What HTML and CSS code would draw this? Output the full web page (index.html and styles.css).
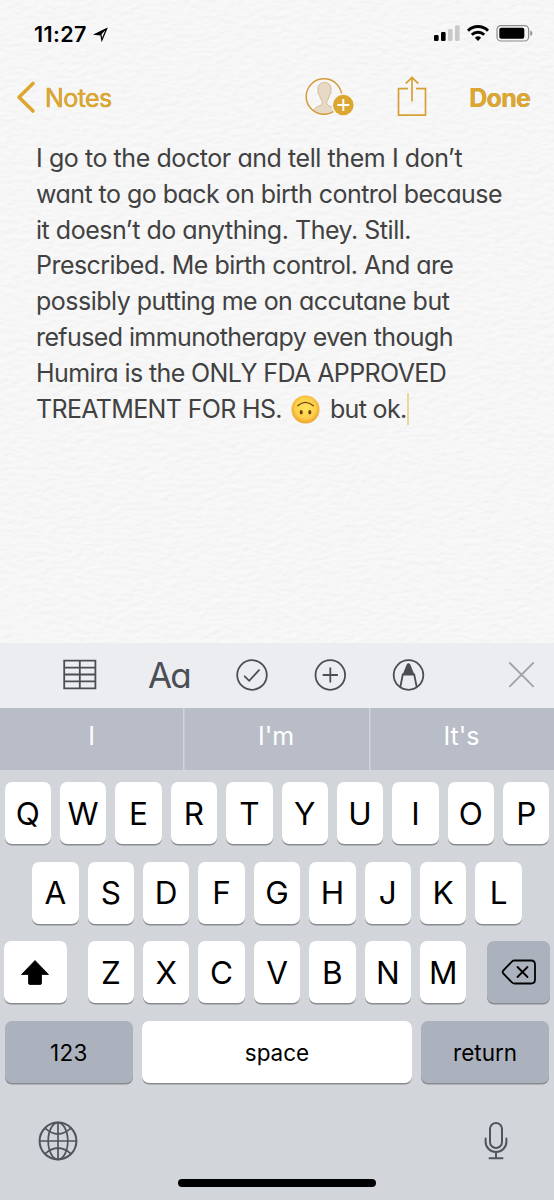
FILE: index.html
```html
<!DOCTYPE html>
<html lang="en">
<head>
    <meta charset="UTF-8">
    <meta name="viewport" content="width=device-width, initial-scale=1.0">
    <title>Notes</title>
    <link rel="stylesheet" href="styles.css">
</head>
<body>
    <div class="screen">
        <svg class="paper" width="554" height="643">
            <filter id="grain" x="0" y="0" width="100%" height="100%" color-interpolation-filters="sRGB">
                <feTurbulence type="fractalNoise" baseFrequency="0.11 0.22" numOctaves="2" seed="4" result="noise"/>
                <feDiffuseLighting in="noise" surfaceScale="0.28" lighting-color="#fafafa">
                    <feDistantLight azimuth="250" elevation="80"/>
                </feDiffuseLighting>
            </filter>
            <rect width="554" height="643" filter="url(#grain)"/>
        </svg>

        <header class="status-bar">
            <span class="time">11:27</span>
            <svg class="location" width="16" height="16" viewBox="0 0 16 16">
                <path d="M2.2 7.300 13.600 1.800 8.900 13 7.900 7.800Z" fill="none" stroke="#000" stroke-width="1.300"/>
                <path d="M1 7.500 14 1 8 8Z"/>
            </svg>
            <svg class="indicators" width="100" height="18" viewBox="0 0 100 18">
                <rect x="0" y="10" width="4.6" height="6" rx="1.3"/>
                <rect x="7" y="7" width="4.6" height="9" rx="1.3"/>
                <rect x="14" y="4" width="4.6" height="12" rx="1.3" fill="#c9c9c9"/>
                <rect x="21" y="0.3" width="4.6" height="15.7" rx="1.3" fill="#c9c9c9"/>
                <g fill="none" stroke="#000" stroke-width="2.9">
                    <path d="M34 5.7a14 14 0 0 1 20 0"/>
                    <path d="M37.8 9.8a8.8 8.8 0 0 1 12.4 0"/>
                </g>
                <path d="M40.9 12.7a4.6 4.6 0 0 1 6.2 0L44 15.9Z"/>
                <rect x="63" y="0.6" width="31.6" height="15.4" rx="4" fill="none" stroke="#8c8c8c" stroke-width="1.2"/>
                <rect x="65.3" y="2.8" width="25" height="11" rx="2"/>
                <path d="M96.3 5.6q2 .6 2 2.7t-2 2.7Z" fill="#8c8c8c"/>
            </svg>
        </header>

        <nav class="nav-bar">
            <svg class="chevron" width="20" height="34" viewBox="0 0 20 34">
                <path d="M17 3.5 3 17.2 17 31" fill="none" stroke="#dba731" stroke-width="3.6" stroke-linecap="round" stroke-linejoin="round"/>
            </svg>
            <span class="back">Notes</span>
            <svg class="person" width="50" height="40" viewBox="0 0 50 40">
                <path d="M8 33.200q2.500-3.200 8-5 1.500-.8 1.200-4-2.200-2.400-2.700-6.200-1.800-.8-1.500-3.500-.9-9 6.500-9t6.500 9q.2 2.700-1.500 3.500-.5 3.800-2.700 6.200-.3 3.200 1.200 4 5 1.800 7 5-5 4.300-11 4.300t-11-4.300Z" fill="#e7d9c6" stroke="#cfae82" stroke-width=".8"/>
                <circle cx="19" cy="19.5" r="17.8" fill="none" stroke="#d39b3a" stroke-width="1.5"/>
                <circle cx="38.3" cy="28" r="11.8" fill="#f6f6f6"/>
                <circle cx="38.3" cy="28" r="10.3" fill="#dba731"/>
                <path d="M32.3 28h12M38.3 22v12" stroke="#fff" stroke-width="2"/>
            </svg>
            <svg class="share" width="30" height="42" viewBox="0 0 30 42">
                <path d="M11 13.7H1.5v26.5h27V13.7H19M15 26.5V2.500M8.7 8.7 15 2.400l6.300 6.300" fill="none" stroke="#d6a035" stroke-width="1.7"/>
            </svg>
            <span class="done">Done</span>
        </nav>

        <main class="note">
            <p class="line l1">I go to the doctor and tell them I don’t</p>
            <p class="line l2">want to go back on birth control because</p>
            <p class="line l3">it doesn’t do anything. They. Still.</p>
            <p class="line l4">Prescribed. Me birth control. And are</p>
            <p class="line l5">possibly putting me on accutane but</p>
            <p class="line l6">refused immunotherapy even though</p>
            <p class="line l7">Humira is the ONLY FDA APPROVED</p>
            <p class="line l8">
                <span>TREATMENT FOR HS.</span>
                <svg class="emoji" width="29" height="29" viewBox="0 0 29 29">
                    <defs>
                        <radialGradient id="face" cx=".5" cy=".45" r=".55">
                            <stop offset="0" stop-color="#ffe45f"/>
                            <stop offset=".65" stop-color="#fdd04a"/>
                            <stop offset="1" stop-color="#eda02c"/>
                        </radialGradient>
                    </defs>
                    <circle cx="14.5" cy="14.5" r="14" fill="url(#face)"/>
                    <path d="M6.7 10.7q7.8-6.700 15.600 0" fill="none" stroke="#70400f" stroke-width="1.3" stroke-linecap="round"/>
                    <ellipse cx="10.2" cy="17.3" rx="1.5" ry="2.3" fill="#70400f"/>
                    <ellipse cx="18.8" cy="17.3" rx="1.5" ry="2.3" fill="#70400f"/>
                </svg>
                <span>but ok.</span><i class="caret"></i>
            </p>
        </main>

        <div class="toolbar">
            <svg width="554" height="65" viewBox="0 0 554 65" fill="none" stroke="#4b4e54" stroke-width="1.8">
                <path d="M64.2 17.7h31.200v27.600H64.200ZM79.800 17.700v27.600M64.200 24.700h31.200M64.200 31.500h31.200M64.200 38.400h31.200"/>
                <circle cx="252" cy="32" r="14.8"/>
                <path d="m244.700 33.300 4.500 4.500 9.800-10.600" stroke-linecap="round"/>
                <circle cx="330.3" cy="32" r="14.8"/>
                <path d="M322.700 32h15.200M330.300 24.400v15.200"/>
                <circle cx="408.5" cy="32" r="14.8"/>
                <path d="M400.300 44 402.800 31.500h11.400L416.700 44"/>
                <path d="m403.800 31 3.700-9q1-1.800 2 0l3.700 9Z" fill="#4b4e54"/>
                <path d="m509.800 20 23.400 23.400M533.200 20l-23.400 23.400" stroke="#a1a3a8" stroke-linecap="round"/>
            </svg>
            <span class="format">Aa</span>
        </div>

        <div class="suggestions">
            <span>I</span>
            <span>I'm</span>
            <span>It's</span>
        </div>

        <div class="keyboard">
            <div class="row">
                <div class="key">Q</div><div class="key">W</div><div class="key">E</div><div class="key">R</div><div class="key">T</div><div class="key">Y</div><div class="key">U</div><div class="key">I</div><div class="key">O</div><div class="key">P</div>
            </div>
            <div class="row">
                <div class="key">A</div><div class="key">S</div><div class="key">D</div><div class="key">F</div><div class="key">G</div><div class="key">H</div><div class="key">J</div><div class="key">K</div><div class="key">L</div>
            </div>
            <div class="row spread">
                <div class="key side">
                    <svg width="30" height="26" viewBox="0 0 30 26">
                        <path d="M15 1.5 28.5 15.500H21.500V24q0 1.500-1.500 1.500H10q-1.500 0-1.500-1.500V15.500H1.500Z" stroke="#000" stroke-width=".8" stroke-linejoin="round"/>
                    </svg>
                </div>
                <div class="row">
                    <div class="key">Z</div><div class="key">X</div><div class="key">C</div><div class="key">V</div><div class="key">B</div><div class="key">N</div><div class="key">M</div>
                </div>
                <div class="key side dark">
                    <svg width="36" height="26" viewBox="0 0 36 26" fill="none" stroke="#000" stroke-width="1.8" stroke-linejoin="round" stroke-linecap="round">
                        <path d="M13.500 1.500h16.500q4 0 4 4v15q0 4-4 4H13.500q-1.500 0-2.600-1.100L2.300 14.500q-1.300-1.500 0-3l8.600-8.900q1.100-1.100 2.600-1.100Z"/>
                        <path d="m16.500 8 10 10M26.500 8l-10 10"/>
                    </svg>
                </div>
            </div>
            <div class="row">
                <div class="key wide dark num">123</div>
                <div class="key space">space</div>
                <div class="key wide dark">return</div>
            </div>
            <div class="bottom">
                <svg width="40" height="40" viewBox="0 0 40 40" fill="none" stroke="#50545c" stroke-width="1.7">
                    <circle cx="20" cy="20" r="18.4" stroke-width="2"/>
                    <ellipse cx="20" cy="20" rx="9.8" ry="18.4"/>
                    <path d="M20 1.600v36.800M1.600 20h36.800M7 7.200q13 11.600 26 0M7 32.800q13-11.600 26 0"/>
                </svg>
                <svg width="24" height="40" viewBox="0 0 24 40" fill="none" stroke="#50545c" stroke-width="2" stroke-linecap="round">
                    <rect x="6" y="2" width="12" height="25" rx="6"/>
                    <path d="M1.600 17.500v3.500a10.400 10 0 0 0 20.800 0v-3.500M12 31v6M5.500 37.200h13"/>
                </svg>
            </div>
            <div class="home"></div>
        </div>
    </div>
</body>
</html>
```
FILE: styles.css
```css
body {
    margin: 0;
    font-family: Inter, "Liberation Sans", sans-serif;
    background: #f6f6f6;
}
.screen {
    position: relative;
    width: 554px;
    height: 1200px;
    overflow: hidden;
    display: flex;
    flex-direction: column;
}
.screen > * {
    flex: none;
}
.paper {
    position: absolute;
    top: 0;
    left: 0;
    z-index: -1;
}
svg {
    display: block;
}
.status-bar {
    height: 68px;
    box-sizing: border-box;
    padding: 0 20px 0 34px;
    display: flex;
    align-items: center;
}
.time {
    font-size: 21.5px;
    font-weight: 600;
    letter-spacing: 0.4px;
}
.location {
    margin: 2px 0 0 6px;
}
.indicators {
    margin-left: auto;
}
.nav-bar {
    height: 58px;
    box-sizing: border-box;
    padding: 0 24px 0 16px;
    display: flex;
    align-items: center;
    color: #dba731;
    font-size: 25px;
    text-shadow: 0 -0.5px 0 #b98a3c;
}
.back {
    margin-left: 9px;
    letter-spacing: -0.6px;
    padding-top: 1px;
    -webkit-text-stroke: 0.3px #dba731;
}
.person {
    margin-left: auto;
    margin-right: 42px;
}
.share {
    margin-right: 42px;
    margin-top: -3px;
}
.done {
    font-weight: 700;
    letter-spacing: -0.8px;
    padding-top: 1px;
}
.note {
    height: 517px;
    box-sizing: border-box;
    padding: 15px 36px 0;
    color: #414141;
    font-size: 25px;
    line-height: 35.8px;
    font-feature-settings: "cv11";
}
.line {
    margin: 0;
    white-space: nowrap;
}
.l1 {
    letter-spacing: -0.43px;
}
.l2, .l4 {
    letter-spacing: -0.54px;
}
.l3 {
    letter-spacing: -0.48px;
}
.l5 {
    letter-spacing: -0.51px;
}
.l6, .l7 {
    letter-spacing: -0.6px;
}
.l8 {
    display: flex;
    align-items: center;
    letter-spacing: -0.65px;
}
.emoji {
    margin: 0 10px 0 9px;
}
.caret {
    width: 2.5px;
    height: 32px;
    background: #ecd79b;
}
.toolbar {
    position: relative;
    height: 65px;
    background: #ecedf1;
}
.format {
    position: absolute;
    left: 148px;
    top: 10px;
    font-size: 35px;
    line-height: 44px;
    letter-spacing: -1.8px;
    color: #4b4e54;
    font-feature-settings: "cv11";
}
.suggestions {
    height: 62px;
    display: grid;
    grid-template-columns: 183px 186px 185px;
    background: #b9bdc7;
    color: #fff;
    font-size: 25px;
    line-height: 57px;
    text-align: center;
}
.suggestions span + span {
    box-shadow: inset 1.5px 0 0 #d2d5db;
}
.keyboard {
    height: 430px;
    box-sizing: border-box;
    padding: 12px 4.4px 0;
    background: #d2d5da;
    display: flex;
    flex-direction: column;
    gap: 17.7px;
}
.row {
    display: flex;
    justify-content: center;
    gap: 9px;
}
.spread {
    justify-content: space-between;
}
.key {
    width: 46.4px;
    height: 62px;
    display: flex;
    align-items: center;
    justify-content: center;
    background: #fff;
    border-radius: 7px;
    box-shadow: 0 1.5px 0 #898b8f;
    font-size: 31.5px;
    color: #000;
}
.side {
    width: 62.2px;
}
.wide {
    width: 128.8px;
    font-size: 22.5px;
}
.num {
    letter-spacing: 0.4px;
}
.space {
    width: 269.4px;
    font-size: 22.5px;
}
.dark {
    background: #acb2bd;
}
.bottom {
    display: flex;
    justify-content: space-between;
    padding: 20px 42px 0 33.4px;
}
.home {
    width: 198px;
    height: 8px;
    border-radius: 4px;
    background: #000;
    margin: 1px auto 0;
}
```
